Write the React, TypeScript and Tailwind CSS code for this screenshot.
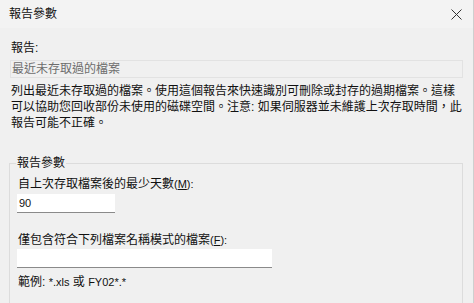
import React from 'react';

const ReportParamsDialog = () => {
  return (
    <div className="w-[474px] h-[303px] overflow-hidden bg-[#f0f0f0] border-r border-[#cfcfcf] font-['Liberation_Sans','Noto_Sans_CJK_TC',sans-serif] text-[12px] leading-[16px] text-[#111]">
      {/* Title bar */}
      <div className="h-[28px] bg-[#f3f3f3] flex items-center justify-between pl-[9px] pr-[10px]">
        <span>報告參數</span>
        <svg width="11" height="11" viewBox="0 0 11 11" className="mr-[1px]">
          <path d="M0.5 0.5 L10.5 10.5 M10.5 0.5 L0.5 10.5" stroke="#333" strokeWidth="1" />
        </svg>
      </div>

      <div className="pl-[10px] pr-[10px]">
        <div className="mt-[12px] pl-[1px]">報告:</div>
        <div className="mt-[4px] h-[18px] border border-[#e2e2e2] flex items-center pl-[1px] text-[#6d6d6d]">
          最近未存取過的檔案
        </div>

        <p className="mt-[5px] pl-[1px] leading-[16px]">
          列出最近未存取過的檔案。使用這個報告來快速識別可刪除或封存的過期檔案。這樣
          <br />
          可以協助您回收部份未使用的磁碟空間。注意: 如果伺服器並未維護上次存取時間，此
          <br />
          報告可能不正確。
        </p>

        <fieldset className="mt-[24px] ml-[-1px] border border-[#dcdcdc] h-[200px] pl-[7px]">
          <legend className="px-[1px] ml-[-1px]">報告參數</legend>
          <div className="mt-[5px] pl-[1px]">
            自上次存取檔案後的最少天數<span className="text-[11px]">(<u>M</u>):</span>
          </div>
          <div className="mt-[2px] w-[98px] h-[19px] bg-white border-b border-[#8a8a8a] flex items-center pl-[2px] text-[11px]">
            90
          </div>
          <div className="mt-[19px] pl-[1px]">
            僅包含符合下列檔案名稱模式的檔案<span className="text-[11px]">(<u>F</u>):</span>
          </div>
          <div className="mt-[1px] w-[255px] h-[19px] bg-white border-b border-[#8a8a8a]" />
          <div className="mt-[6px] pl-[1px]">
            範例: <span className="text-[11px]">*.xls</span> 或 <span className="text-[11px]">FY02*.*</span>
          </div>
        </fieldset>
      </div>
    </div>
  );
};

export default function App() {
  return <ReportParamsDialog />;
}
